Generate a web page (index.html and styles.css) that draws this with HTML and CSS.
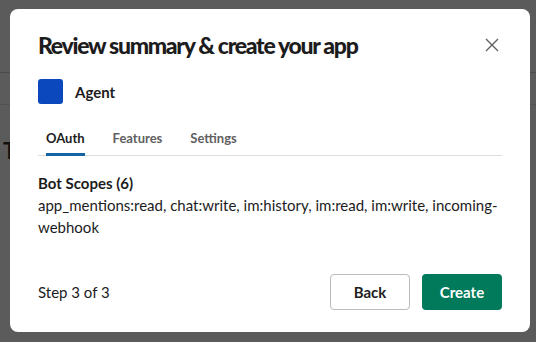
FILE: index.html
```html
<!DOCTYPE html>
<html lang="en">
<head>
    <meta charset="UTF-8">
    <meta name="viewport" content="width=device-width, initial-scale=1.0">
    <title>Review summary</title>
    <link rel="stylesheet" href="styles.css">
</head>
<body>
    <!-- app page dimmed behind the dialog -->
    <div class="page">
        <div class="page-top"></div>
        <div class="page-bar"></div>
        <h1 class="page-title">T</h1>
    </div>

    <div class="overlay">
        <div class="modal">
            <div class="modal-header">
                <h2>Review summary &amp; create your app</h2>
                <button class="close-btn" aria-label="Close">
                    <svg width="14" height="14" viewBox="0 0 14 14">
                        <path d="M1 1 L13 13 M13 1 L1 13" stroke="#616061" stroke-width="1.4" fill="none"/>
                    </svg>
                </button>
            </div>

            <div class="app-row">
                <span class="app-icon"></span>
                <span class="app-name">Agent</span>
            </div>

            <div class="tabs">
                <button class="tab active">OAuth</button>
                <button class="tab">Features</button>
                <button class="tab">Settings</button>
            </div>

            <div class="tab-body">
                <div class="scope-title">Bot Scopes (6)</div>
                <div class="scope-list">app_mentions:read, chat:write, im:history, im:read, im:write, incoming-webhook</div>
            </div>

            <div class="modal-footer">
                <span class="step">Step 3 of 3</span>
                <div class="actions">
                    <button class="btn btn-back">Back</button>
                    <button class="btn btn-create">Create</button>
                </div>
            </div>
        </div>
    </div>
</body>
</html>
```

FILE: styles.css
```css
body {
    margin: 0;
    font-family: 'Lato', 'Noto Sans', sans-serif;
    background-color: #5b5b5b;
    color: #1d1c1d;
    height: 342px;
    overflow: hidden;
}

.page-top {
    height: 72px;
    border-bottom: 1px solid #4b4b4b;
}

.page-bar {
    height: 31px;
    border-bottom: 1px solid #525252;
}

.page-title {
    margin: 32px 0 0 3px;
    font-size: 22px;
    font-weight: 700;
    color: #111;
}

.overlay {
    position: fixed;
    inset: 0;
}

.modal {
    position: absolute;
    left: 10px;
    top: 9px;
    width: 520px;
    height: 323px;
    box-sizing: border-box;
    padding: 0 28px;
    background: #ffffff;
    border-radius: 8px;
    display: flex;
    flex-direction: column;
}

.modal-header {
    display: flex;
    align-items: center;
    justify-content: space-between;
    height: 72px;
}

.modal-header h2 {
    margin: 0;
    font-size: 23px;
    font-weight: 900;
    letter-spacing: -1.3px;
    line-height: 30px;
}

.close-btn {
    width: 22px;
    height: 22px;
    padding: 0;
    margin-right: -1px;
    border: none;
    background: none;
    display: flex;
    align-items: center;
    justify-content: center;
    cursor: pointer;
}

.app-row {
    display: flex;
    align-items: center;
    gap: 12px;
    height: 25px;
    margin-top: -2px;
}

.app-icon {
    width: 25px;
    height: 25px;
    border-radius: 3px;
    background-color: #0b48bd;
}

.app-name {
    font-size: 15px;
    font-weight: 700;
}

.tabs {
    display: flex;
    gap: 28px;
    padding-left: 8px;
    margin-top: 26px;
    border-bottom: 1px solid #dddddd;
}

.tab {
    padding: 0 0 7px;
    border: none;
    border-bottom: 3px solid transparent;
    margin-bottom: -1px;
    background: none;
    font-family: inherit;
    font-size: 13px;
    font-weight: 700;
    color: #616061;
    cursor: pointer;
}

.tab.active {
    color: #1d1c1d;
    border-bottom-color: #1264a3;
}

.tab-body {
    padding-top: 16px;
    font-size: 15px;
}

.scope-title {
    font-weight: 700;
    line-height: 22px;
}

.scope-list {
    line-height: 22px;
}

.modal-footer {
    margin-top: auto;
    margin-bottom: 22px;
    display: flex;
    align-items: center;
    justify-content: space-between;
}

.step {
    font-size: 15px;
}

.actions {
    display: flex;
    gap: 12px;
}

.btn {
    width: 80px;
    height: 36px;
    border-radius: 4px;
    font-family: inherit;
    font-size: 15px;
    font-weight: 700;
    cursor: pointer;
}

.btn-back {
    background: #ffffff;
    border: 1px solid #bbbbbb;
    color: #1d1c1d;
}

.btn-create {
    background: #007a5a;
    border: none;
    color: #ffffff;
}
```
